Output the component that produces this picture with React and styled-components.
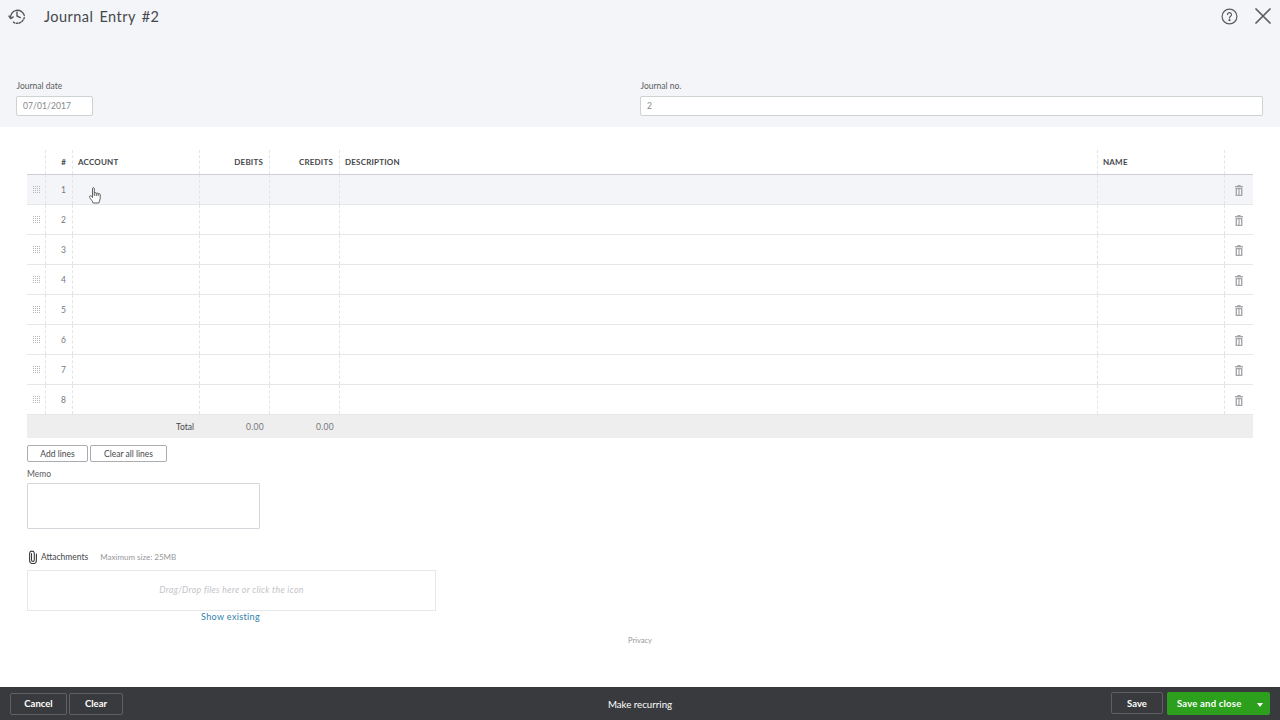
import React from 'react';
import styled, { createGlobalStyle } from 'styled-components';

const GlobalStyle = createGlobalStyle`
  html, body {
    margin: 0;
    padding: 0;
    background: #fff;
    font-family: "Lato", "Liberation Sans", sans-serif;
    color: #393a3d;
  }
  * { box-sizing: border-box; }
`;

const COLUMNS = '19px 27px 127px 70px 70px 758px 127px 28px';

const Page = styled.div`
  width: 1280px;
  height: 720px;
  display: flex;
  flex-direction: column;
  overflow: hidden;
`;

const Top = styled.div`
  height: 127px;
  flex: none;
  background: #f4f5f8;
  padding: 0 9px 0 8px;
  display: flex;
  flex-direction: column;
`;

const TitleRow = styled.div`
  height: 32px;
  display: flex;
  align-items: center;
`;

const Title = styled.h1`
  margin: 0 0 0 18px;
  font-size: 14.5px;
  font-weight: 400;
  letter-spacing: 0.45px;
  word-spacing: 2px;
  color: #45474b;
`;

const TopIcons = styled.div`
  margin-left: auto;
  display: flex;
  align-items: center;
  gap: 17px;
`;

const Fields = styled.div`
  margin-top: 48px;
  padding-left: 8px;
  display: flex;
`;

const Field = styled.div`
  display: flex;
  flex-direction: column;
  width: ${p => p.$width}px;
  margin-left: ${p => p.$offset || 0}px;
`;

const FieldLabel = styled.label`
  font-size: 8.5px;
  line-height: 12px;
  margin-bottom: 4px;
  padding-left: 0.5px;
  color: #5a5c60;
`;

const FieldInput = styled.div`
  height: 20px;
  background: #fff;
  border: 1px solid #cdd2d2;
  border-radius: 2px;
  padding: 0 6px;
  font-size: 8.5px;
  line-height: 18px;
  letter-spacing: 0.1px;
  color: #85888c;
`;

const Body = styled.div`
  flex: 1;
  padding: 23px 27px 0;
  display: flex;
  flex-direction: column;
  align-items: flex-start;
`;

const Table = styled.div`
  width: 1226px;
`;

const HeadRow = styled.div`
  display: grid;
  grid-template-columns: ${COLUMNS};
  height: 25px;
  border-bottom: 1px solid #cfd1d4;
`;

const Row = styled.div`
  display: grid;
  grid-template-columns: ${COLUMNS};
  height: 30px;
  background: ${p => (p.$active ? '#f4f5f8' : '#fff')};
  border-bottom: 1px solid #e6e7ea;
  &:last-child { border-bottom: 1px solid #bfc1c4; }
`;

const HeadCell = styled.div`
  display: flex;
  align-items: center;
  justify-content: ${p => (p.$right ? 'flex-end' : 'flex-start')};
  padding: ${p => (p.$right ? '0 6px 0 0' : '0 5px')};
  font-size: 8px;
  font-weight: 700;
  letter-spacing: 0.2px;
  color: #45474b;
  border-right: ${p => (p.$last ? 'none' : '1px dashed #e3e4e6')};
`;

const Cell = styled.div`
  display: flex;
  align-items: center;
  justify-content: ${p => (p.$center ? 'center' : p.$right ? 'flex-end' : 'flex-start')};
  padding: ${p => (p.$center ? '0' : '0 6px 0 0')};
  font-size: 8.5px;
  color: #75777c;
  border-right: ${p => (p.$last ? 'none' : '1px dashed #e3e4e6')};
`;

const TotalRow = styled.div`
  display: grid;
  grid-template-columns: ${COLUMNS};
  height: 23px;
  background: #eeeeee;
`;

const TotalLabel = styled.div`
  grid-column: 1 / span 3;
  display: flex;
  align-items: center;
  justify-content: flex-end;
  padding-right: 6px;
  font-size: 8.5px;
  color: #45474b;
`;

const TotalValue = styled.div`
  display: flex;
  align-items: center;
  justify-content: flex-end;
  padding-right: 6px;
  font-size: 8.5px;
  letter-spacing: 0.3px;
  color: #75777c;
`;

const Buttons = styled.div`
  display: flex;
  gap: 2px;
  margin-top: 7px;
`;

const SmallButton = styled.button`
  width: ${p => p.$width}px;
  height: 17px;
  padding: 0;
  background: #fff;
  border: 1px solid #a9acb0;
  border-radius: 2px;
  font-family: inherit;
  font-size: 8.5px;
  color: #45474b;
`;

const MemoLabel = styled.div`
  margin-top: 6px;
  font-size: 8.5px;
  line-height: 12px;
  color: #5a5c60;
`;

const MemoBox = styled.div`
  margin-top: 3px;
  width: 233px;
  height: 46px;
  border: 1px solid #d4d7dc;
  border-radius: 1px;
`;

const AttachRow = styled.div`
  margin-top: 20px;
  height: 16px;
  display: flex;
  align-items: center;
`;

const AttachTitle = styled.span`
  margin-left: 1px;
  font-size: 8.5px;
  color: #45474b;
`;

const AttachHint = styled.span`
  margin-left: 12px;
  font-size: 8px;
  color: #95989c;
`;

const DropZone = styled.div`
  margin-top: 5px;
  width: 409px;
  height: 41px;
  padding-bottom: 3px;
  border: 1px solid #e6e7ea;
  display: flex;
  align-items: center;
  justify-content: center;
  font-size: 8.8px;
  font-style: italic;
  letter-spacing: 0.3px;
  color: #c2c4c8;
`;

const ShowExisting = styled.a`
  width: 407px;
  text-align: center;
  font-size: 9px;
  line-height: 12px;
  letter-spacing: 0.35px;
  color: #2f80ad;
`;

const Privacy = styled.div`
  align-self: stretch;
  margin-top: 13px;
  text-align: center;
  font-size: 7.5px;
  line-height: 10px;
  color: #95989c;
`;

const Footer = styled.div`
  height: 33px;
  flex: none;
  background: #393a3d;
  padding: 0 10px;
  display: grid;
  grid-template-columns: 1fr auto 1fr;
  align-items: center;
`;

const FooterGroup = styled.div`
  display: flex;
  gap: ${p => (p.$end ? '4px' : '2px')};
  justify-content: ${p => (p.$end ? 'flex-end' : 'flex-start')};
`;

const DarkButton = styled.button`
  width: ${p => p.$width}px;
  height: 22px;
  padding: 0;
  background: transparent;
  border: 1px solid #5f6064;
  border-radius: 2px;
  font-family: inherit;
  font-size: 9.5px;
  font-weight: 700;
  color: #fff;
`;

const Recurring = styled.div`
  font-size: 9.7px;
  color: #fff;
`;

const GreenButton = styled.div`
  width: 103px;
  height: 23px;
  background: #2ca01c;
  border-radius: 2px;
  display: flex;
  align-items: center;
  padding-left: 10px;
  position: relative;
  font-size: 9.5px;
  font-weight: 700;
  letter-spacing: 0.2px;
  color: #fff;
`;

const Caret = styled.span`
  position: absolute;
  right: 7px;
  top: 11px;
  border-left: 3.5px solid transparent;
  border-right: 3.5px solid transparent;
  border-top: 4px solid #fff;
`;

const CursorWrap = styled.div`
  position: absolute;
  left: 88px;
  top: 187px;
  width: 14px;
  height: 17px;
  pointer-events: none;
`;

const HistoryIcon = () => (
  <svg width="18" height="18" viewBox="0 0 18 18" fill="none" stroke="#55575c" strokeWidth="1.4" strokeLinecap="round" strokeLinejoin="round">
    <path d="M2.6 11 A7 7 0 0 1 16.3 8.4" />
    <path d="M16.3 10.4 L15.8 12 M14.9 13.3 L13.9 14.5 M12.6 15.3 L11.2 16 M9.8 16.3 L8.2 16.3 M6.6 15.9 L5.4 15.2" />
    <path d="M1 9 L2.7 11.6 L5.2 9.9" />
    <path d="M9 5 V9 L12.3 10.6" />
  </svg>
);

const HelpIcon = () => (
  <svg width="17" height="17" viewBox="0 0 17 17" fill="none" stroke="#5a5c60" strokeWidth="1.2" strokeLinecap="round">
    <circle cx="8.5" cy="8.5" r="7.4" />
    <path d="M6.5 6.6 A2 2 0 1 1 9.4 8.4 C8.7 8.8 8.5 9.2 8.5 10" />
    <circle cx="8.5" cy="12.2" r="0.5" fill="#5a5c60" />
  </svg>
);

const CloseIcon = () => (
  <svg width="16" height="16" viewBox="0 0 16 16" fill="none" stroke="#5a5c60" strokeWidth="1.7" strokeLinecap="round">
    <path d="M1 1 L15 15 M15 1 L1 15" />
  </svg>
);

const DragIcon = () => (
  <svg width="7" height="7" viewBox="0 0 7 7" fill="#b4b6ba">
    {[0, 2, 4, 6].map(x => [0, 2, 4, 6].map(y => <rect key={`${x}-${y}`} x={x} y={y} width="1" height="1" />))}
  </svg>
);

const TrashIcon = () => (
  <svg width="8" height="11" viewBox="0 0 8 11" fill="#a4a6aa" style={{ marginTop: 1 }}>
    <rect x="2.4" y="0" width="3.2" height="1" />
    <rect x="0" y="1" width="8" height="1.4" />
    <path d="M0.6 3 H7.4 V11 H0.6 Z M2 4.2 V9.8 H3.4 V4.2 Z M4.6 4.2 V9.8 H6 V4.2 Z" fillRule="evenodd" />
  </svg>
);

const ClipIcon = () => (
  <svg width="13" height="14" viewBox="0 0 13 14" fill="none" stroke="#393a3d" strokeWidth="1.1" strokeLinecap="round">
    <path d="M4.5 3.5 V10 A1.4 1.4 0 0 0 7.3 10 V3 A2.4 2.4 0 0 0 2.6 3 V10.2 A3.4 3.4 0 0 0 9.4 10.2 V4" />
  </svg>
);

const HandCursor = () => (
  <svg width="14" height="17" viewBox="0 0 14 17" fill="#fff" stroke="#3a3a3a" strokeWidth="0.8" strokeLinejoin="round">
    <path d="M4.5 1.6 C4.5 0.4 6.3 0.4 6.3 1.6 V6.2 C6.7 5.4 8.2 5.5 8.3 6.5 C8.7 5.8 10.1 5.9 10.2 6.9 C10.7 6.3 12.2 6.5 12.2 7.7 V11.5 C12.2 13.4 11 14.4 10.8 16 H5.2 C4.7 14.3 3.6 13.2 2.3 11.4 C1.4 10.2 1.2 9.2 2 8.8 C2.8 8.4 3.8 9.5 4.5 10.5 Z" />
    <path d="M6.3 6.2 V9 M8.3 6.5 V9 M10.2 6.9 V9" fill="none" />
  </svg>
);

const lines = [1, 2, 3, 4, 5, 6, 7, 8];

export default function App() {
  return (
    <Page>
      <GlobalStyle />
      <Top>
        <TitleRow>
          <HistoryIcon />
          <Title>Journal Entry #2</Title>
          <TopIcons>
            <HelpIcon />
            <CloseIcon />
          </TopIcons>
        </TitleRow>
        <Fields>
          <Field $width={77}>
            <FieldLabel>Journal date</FieldLabel>
            <FieldInput>07/01/2017</FieldInput>
          </Field>
          <Field $width={623} $offset={547}>
            <FieldLabel>Journal no.</FieldLabel>
            <FieldInput>2</FieldInput>
          </Field>
        </Fields>
      </Top>

      <Body>
        <Table>
          <HeadRow>
            <HeadCell />
            <HeadCell $right>#</HeadCell>
            <HeadCell>ACCOUNT</HeadCell>
            <HeadCell $right>DEBITS</HeadCell>
            <HeadCell $right>CREDITS</HeadCell>
            <HeadCell>DESCRIPTION</HeadCell>
            <HeadCell>NAME</HeadCell>
            <HeadCell $last />
          </HeadRow>
          {lines.map(n => (
            <Row key={n} $active={n === 1}>
              <Cell $center><DragIcon /></Cell>
              <Cell $right>{n}</Cell>
              <Cell />
              <Cell />
              <Cell />
              <Cell />
              <Cell />
              <Cell $center $last><TrashIcon /></Cell>
            </Row>
          ))}
          <TotalRow>
            <TotalLabel>Total</TotalLabel>
            <TotalValue>0.00</TotalValue>
            <TotalValue>0.00</TotalValue>
          </TotalRow>
        </Table>

        <Buttons>
          <SmallButton $width={61}>Add lines</SmallButton>
          <SmallButton $width={77}>Clear all lines</SmallButton>
        </Buttons>

        <MemoLabel>Memo</MemoLabel>
        <MemoBox />

        <AttachRow>
          <ClipIcon />
          <AttachTitle>Attachments</AttachTitle>
          <AttachHint>Maximum size: 25MB</AttachHint>
        </AttachRow>
        <DropZone>Drag/Drop files here or click the icon</DropZone>
        <ShowExisting>Show existing</ShowExisting>
        <Privacy>Privacy</Privacy>
      </Body>

      <Footer>
        <FooterGroup>
          <DarkButton $width={57}>Cancel</DarkButton>
          <DarkButton $width={54}>Clear</DarkButton>
        </FooterGroup>
        <Recurring>Make recurring</Recurring>
        <FooterGroup $end>
          <DarkButton $width={52}>Save</DarkButton>
          <GreenButton>
            Save and close
            <Caret />
          </GreenButton>
        </FooterGroup>
      </Footer>

      <CursorWrap><HandCursor /></CursorWrap>
    </Page>
  );
}
